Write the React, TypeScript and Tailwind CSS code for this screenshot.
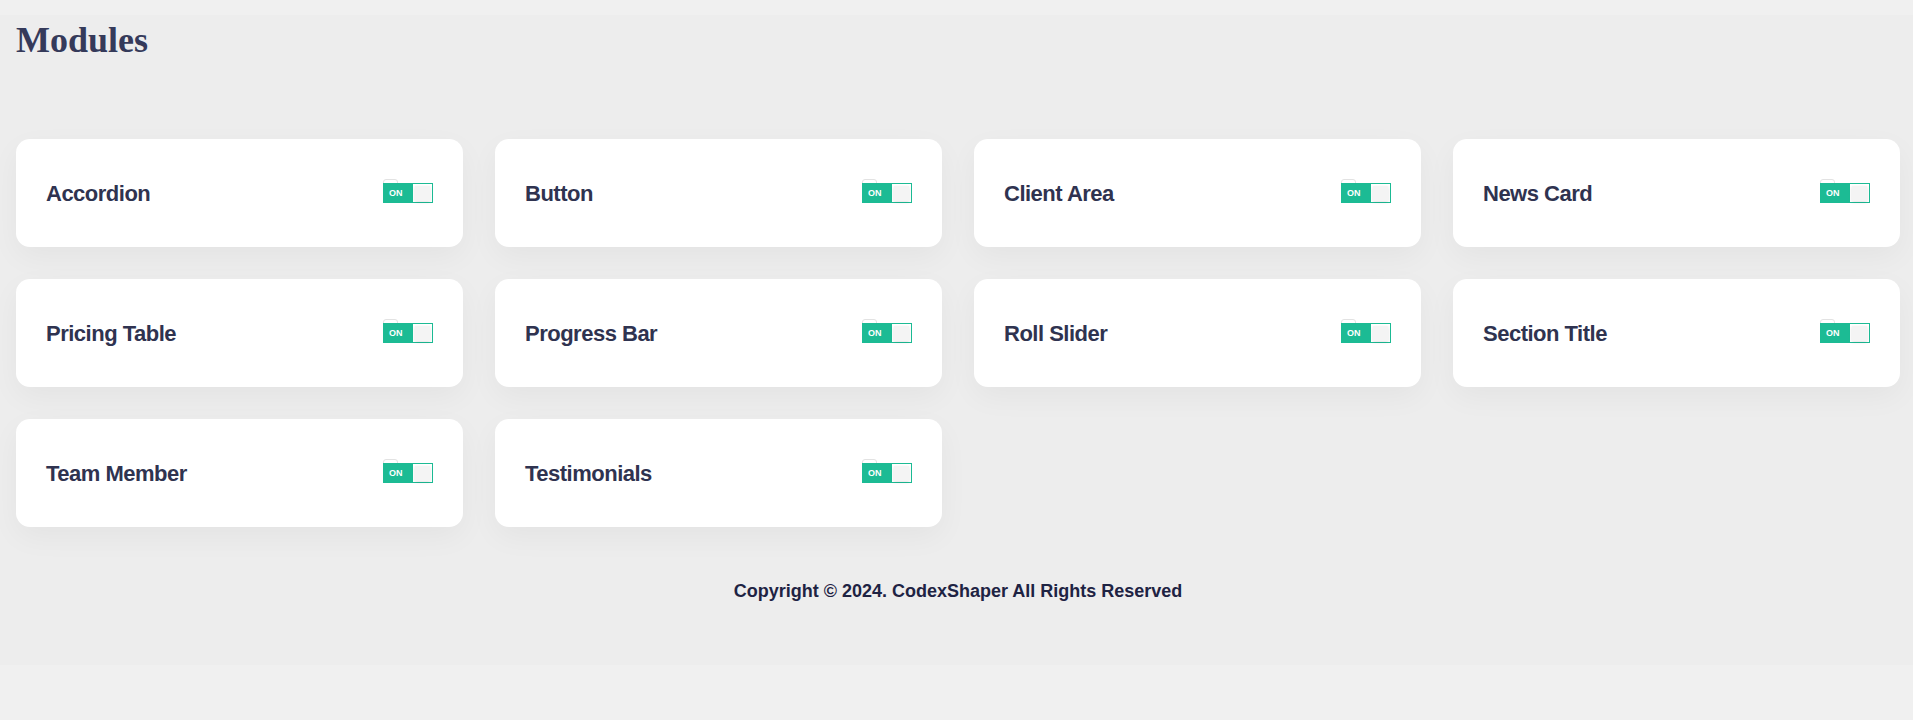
const modules = [
  "Accordion",
  "Button",
  "Client Area",
  "News Card",
  "Pricing Table",
  "Progress Bar",
  "Roll Slider",
  "Section Title",
  "Team Member",
  "Testimonials",
];

function Toggle() {
  return (
    <div className="relative w-[50px] h-[20px]">
      {/* hidden checkbox peeking out behind the switch */}
      <span className="absolute left-0 top-[-4px] w-[15px] h-[12px] rounded-[3px] border border-[#e2e2e2] bg-white" />
      <div className="relative flex w-[50px] h-[20px] bg-[#1cbb94] border border-[#1cbb94]">
        <span className="flex-1 flex items-center pl-[5px] text-[9px] font-bold text-white leading-none font-['Liberation_Sans',Arial,sans-serif]">
          ON
        </span>
        <span className="w-[19px] h-full bg-white flex items-center justify-center">
          <span className="w-[15px] h-[15px] bg-[#f4f4f4] shadow-[0_1px_3px_rgba(0,0,0,0.12)]" />
        </span>
      </div>
    </div>
  );
}

export default function App() {
  return (
    <div className="min-h-screen bg-[#f0f0f0] pt-[15px]">
      <div className="bg-[#ededed] pl-4 pr-[13px] pb-[60px]">
        {/* Header */}
        <h1 className="pt-[4px] text-[36px] leading-[42px] font-bold text-[#353a5a] font-['Liberation_Serif','Times_New_Roman',serif]">
          Modules
        </h1>

        {/* Module grid */}
        <div className="grid grid-cols-4 gap-8 mt-[78px]">
          {modules.map((name) => (
            <div
              key={name}
              className="h-[108px] bg-white rounded-[14px] flex items-center justify-between px-[30px] shadow-[0_10px_30px_rgba(0,0,0,0.045)]"
            >
              <span className="text-[22px] font-bold tracking-[-0.5px] text-[#2f3350] font-['Liberation_Sans',Arial,sans-serif]">
                {name}
              </span>
              <Toggle />
            </div>
          ))}
        </div>

        {/* Footer */}
        <p className="mt-[51px] text-center text-[18px] font-bold text-[#1e2343] font-['Liberation_Sans',Arial,sans-serif]">
          Copyright © 2024. CodexShaper All Rights Reserved
        </p>
      </div>
    </div>
  );
}
